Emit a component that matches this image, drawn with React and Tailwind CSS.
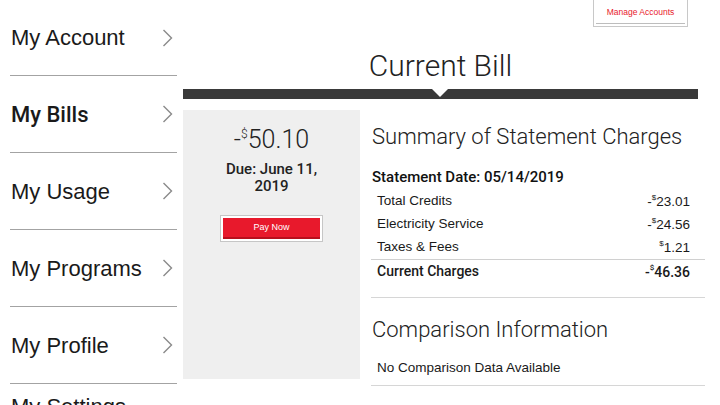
import React from "react";

const Chevron = () => (
  <svg width="11" height="18" viewBox="0 0 11 18" className="shrink-0">
    <polyline points="1.5,1 9.5,9 1.5,17" fill="none" stroke="#8a8a8a" strokeWidth="1.4" />
  </svg>
);

const roboto = { fontFamily: 'Roboto, "Liberation Sans", sans-serif' };

const Amt = ({ neg, val }) => (
  <span className="inline-flex items-start leading-none">
    {neg ? "-" : ""}
    <span className="text-[8px] leading-none relative top-[-1px]">$</span>
    {val}
  </span>
);

export default function App() {
  const items = ["My Account", "My Bills", "My Usage", "My Programs", "My Profile"];
  const sans = { fontFamily: '"Liberation Sans", Arial, sans-serif' };
  return (
    <div className="w-[720px] h-[405px] overflow-hidden bg-white flex text-[#1a1a1a]" style={sans}>
      {/* Sidebar */}
      <div className="w-[183px] shrink-0 pl-[10px] pr-[6px] flex flex-col">
        {items.map((t, i) => (
          <div
            key={t}
            className={`${i === 0 ? "h-[76px]" : "h-[77px]"} shrink-0 border-b border-[#a3a3a3] flex items-center justify-between pl-[1px] pr-[4px]`}
          >
            <span
              className={`text-[22px] ${t === "My Bills" ? "font-medium text-[21.5px]" : ""}`}
              style={t === "My Bills" ? roboto : undefined}
            >
              {t}
            </span>
            <Chevron />
          </div>
        ))}
        <div className="pt-[12px] pl-[1px] text-[22px] leading-none">My Settings</div>
      </div>

      {/* Main */}
      <div className="flex-1 flex flex-col">
        <div className="h-[89px] flex flex-col pr-[22px]">
          <div className="flex justify-end pr-[10px]">
            <div className="w-[95px] h-[27px] border border-t-0 border-[#c8c8c8] bg-white p-[2px] pt-0">
              <div className="h-full pt-[2px] border-b border-[#bdbdbd] flex items-center justify-center text-[8.5px] text-[#e8192c]">
                Manage Accounts
              </div>
            </div>
          </div>
          <div className="text-center text-[30px] font-light leading-none mt-[24px] text-[#222]" style={roboto}>
            Current Bill
          </div>
        </div>
        <div className="relative h-[10px] bg-[#3a3a3a] mr-[22px]">
          <div className="absolute left-[249px] top-0 w-0 h-0 border-l-[8px] border-r-[8px] border-t-[8px] border-l-transparent border-r-transparent border-t-white" />
        </div>

        <div className="flex mt-[11px]">
          {/* Gray panel */}
          <div className="w-[177px] h-[269px] bg-[#efefef] flex flex-col items-center pt-[17px]">
            <div className="flex items-start text-[25px] font-light leading-none text-[#222]" style={roboto}>
              <span>-</span>
              <span className="text-[12px] leading-none relative top-[1px]">$</span>
              <span>50.10</span>
            </div>
            <div
              className="text-[15px] font-medium text-center leading-[17px] mt-[9px] text-[#222] w-[100px]"
              style={roboto}
            >
              Due: June 11, 2019
            </div>
            <div className="mt-[20px] w-[103px] h-[27px] border border-[#c6c6c6] bg-white p-[2px]">
              <div className="h-full bg-[#e8192c] border-b-2 border-[#b80f1d] flex items-center justify-center text-white text-[9px]">
                Pay Now
              </div>
            </div>
          </div>

          {/* Right column */}
          <div className="w-[334px] ml-[11px] flex flex-col">
            <div className="text-[22px] font-light leading-none pl-[1px] mt-[16px] text-[#222]" style={roboto}>
              Summary of Statement Charges
            </div>
            <div className="text-[15px] font-medium pl-[1px] mt-[22px] leading-none text-[#111]" style={roboto}>
              Statement Date: 05/14/2019
            </div>
            <div className="text-[13.5px] mt-[5px]">
              {[
                ["Total Credits", true, "23.01"],
                ["Electricity Service", true, "24.56"],
                ["Taxes & Fees", false, "1.21"],
              ].map(([l, n, v]) => (
                <div key={l} className="h-[23px] flex items-center justify-between pl-[6px] pr-[15px]">
                  <span>{l}</span>
                  <Amt neg={n} val={v} />
                </div>
              ))}
              <div
                className="h-[24px] border-t border-[#d0d0d0] flex items-center justify-between pl-[6px] pr-[15px] font-medium text-[14px]"
                style={roboto}
              >
                <span>Current Charges</span>
                <Amt neg val="46.36" />
              </div>
            </div>
            <div className="border-b border-[#d6d6d6] mt-[14px]" />
            <div className="text-[22px] font-light leading-none pl-[1px] mt-[21px] text-[#222]" style={roboto}>
              Comparison Information
            </div>
            <div className="text-[13.5px] pl-[6px] mt-[17px] pb-[7px] border-b border-[#d6d6d6]">
              No Comparison Data Available
            </div>
          </div>
        </div>
      </div>
    </div>
  );
}
